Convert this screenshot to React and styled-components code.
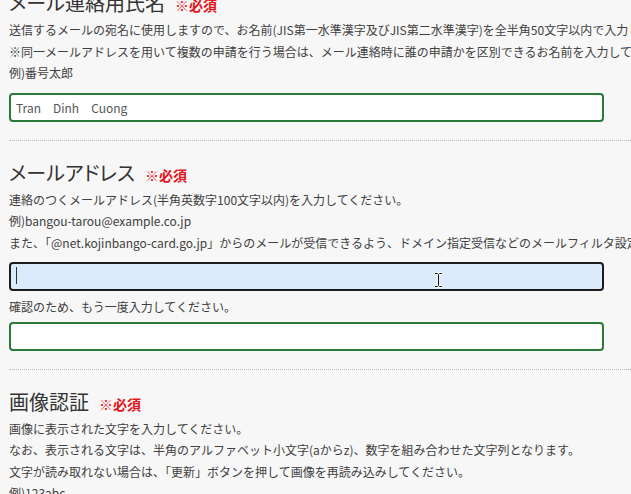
import React from 'react';
import styled, { createGlobalStyle } from 'styled-components';

const GlobalStyle = createGlobalStyle`
  html, body { margin: 0; padding: 0; background: #f7f7f7; overflow: hidden; }
  body {
    font-family: "Noto Sans CJK JP", sans-serif;
    font-feature-settings: "pkna";
    color: #333;
  }
`;

const Page = styled.div`
  width: 1100px;
  margin-top: -29px;
  padding-left: 9px;
`;

const Section = styled.section`
  padding: 17px 0 18px;
  border-bottom: 1px dotted #b8b8b8;
`;

const Heading = styled.h2`
  display: flex;
  align-items: baseline;
  height: 30px;
  margin: 0 0 1px;
  font-size: 20px;
  font-weight: normal;
  font-feature-settings: "palt";
  line-height: 30px;
  color: #333;
`;

const Required = styled.span`
  margin-left: 10px;
  font-size: 14px;
  font-weight: bold;
  color: #e3141c;
`;

const Note = styled.p`
  height: 21.5px;
  margin: ${p => p.$top || 0}px 0 0;
  font-size: 12px;
  line-height: 21.5px;
  white-space: nowrap;
  color: #404040;
`;

const Field = styled.div`
  position: relative;
  width: 595px;
  margin-top: ${p => p.$top}px;
`;

const TextInput = styled.input`
  display: block;
  box-sizing: border-box;
  width: 100%;
  height: 29px;
  padding: 0 5px;
  border: 2px solid ${p => (p.$focused ? '#1c1c1c' : '#2a7a3a')};
  border-radius: 4px;
  background: ${p => (p.$focused ? '#dcebfb' : '#fff')};
  font: 12px "Noto Sans CJK JP", sans-serif;
  color: #555;
  outline: none;
`;

const Caret = styled.span`
  position: absolute;
  left: 7px;
  top: 5px;
  width: 1px;
  height: 17px;
  background: #333;
`;

const Pointer = styled.svg`
  position: absolute;
  left: 425px;
  top: 10px;
`;

const Mark = () => <Required>※必須</Required>;

const IBeam = () => (
  <Pointer width="9" height="16" viewBox="0 0 9 16">
    <path d="M1 1.5h2.5l1 1 1-1H8M1 14.5h2.5l1-1 1 1H8M4.5 2.5v11" fill="none" stroke="#fff" strokeWidth="2.4" />
    <path d="M1 1.5h2.5l1 1 1-1H8M1 14.5h2.5l1-1 1 1H8M4.5 2.5v11" fill="none" stroke="#111" strokeWidth="1" />
  </Pointer>
);

export default function App() {
  return (
    <>
      <GlobalStyle />
      <Page>
        <Section>
          <Heading>メール連絡用氏名<Mark /></Heading>
          <Note>送信するメールの宛名に使用しますので、お名前(JIS第一水準漢字及びJIS第二水準漢字)を全半角50文字以内で入力してください。</Note>
          <Note>※同一メールアドレスを用いて複数の申請を行う場合は、メール連絡時に誰の申請かを区別できるお名前を入力してください。</Note>
          <Note>例)番号太郎</Note>
          <Field $top={9}>
            <TextInput readOnly value="Tran　Dinh　Cuong" />
          </Field>
        </Section>

        <Section>
          <Heading>メールアドレス<Mark /></Heading>
          <Note>連絡のつくメールアドレス(半角英数字100文字以内)を入力してください。</Note>
          <Note>例)bangou-tarou@example.co.jp</Note>
          <Note>また、「@net.kojinbango-card.go.jp」からのメールが受信できるよう、ドメイン指定受信などのメールフィルタ設定を行ってください。</Note>
          <Field $top={9}>
            <TextInput $focused readOnly value="" />
            <Caret />
            <IBeam />
          </Field>
          <Note $top={5}>確認のため、もう一度入力してください。</Note>
          <Field $top={4}>
            <TextInput readOnly value="" />
          </Field>
        </Section>

        <Section>
          <Heading>画像認証<Mark /></Heading>
          <Note>画像に表示された文字を入力してください。</Note>
          <Note>なお、表示される文字は、半角のアルファベット小文字(aからz)、数字を組み合わせた文字列となります。</Note>
          <Note>文字が読み取れない場合は、「更新」ボタンを押して画像を再読み込みしてください。</Note>
          <Note>例)123abc</Note>
        </Section>
      </Page>
    </>
  );
}
